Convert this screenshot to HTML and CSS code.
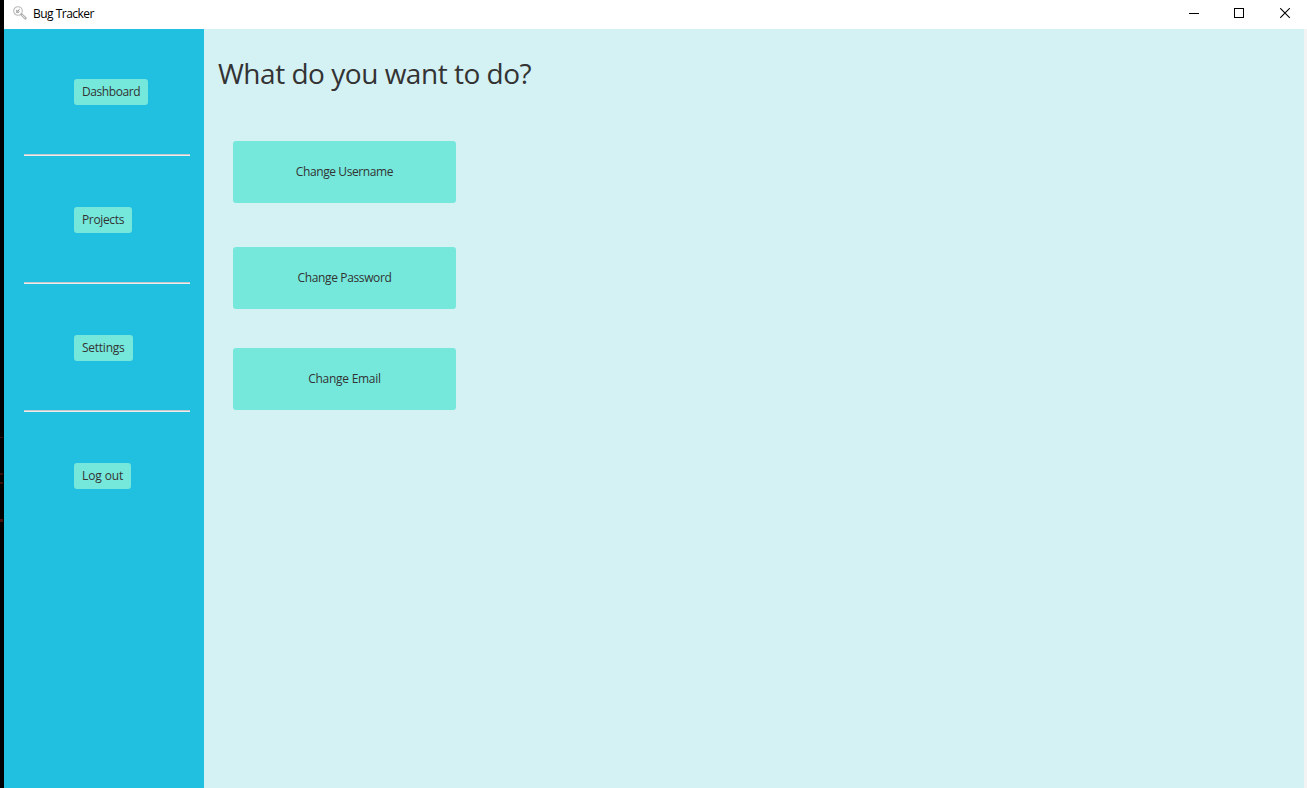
FILE: index.html
```html
<!DOCTYPE html>
<html lang="en">
<head>
<meta charset="utf-8">
<title>Bug Tracker</title>
<link rel="stylesheet" href="styles.css">
</head>
<body>
<div class="desktop">
  <div class="window">
    <header class="titlebar">
      <svg class="app-icon" width="14" height="14" viewBox="0 0 14 14" fill="none">
        <circle cx="5" cy="5" r="4.3" stroke="#b9b9b9" stroke-width="1.1"/>
        <path d="M2.8 6.9 6.8 3M3 4l1 .8M5 7.2l.8-.9M3.5 6 5 4.3l1.2 1L4.5 7Z" stroke="#999" stroke-width=".9"/>
        <path d="M8.4 8.4 12.4 12.3" stroke="#b0b0b0" stroke-width="2.6" stroke-linecap="round"/>
        <path d="M9 9 12.2 12.1" stroke="#eee" stroke-width=".9"/>
      </svg>
      <span class="app-name">Bug Tracker</span>
      <div class="controls">
        <svg width="11" height="11" viewBox="0 0 11 11" shape-rendering="crispEdges"><path d="M0 5h10v1H0z"/></svg>
        <svg class="maximize" width="11" height="11" viewBox="0 0 11 11" fill="none" stroke="#000" shape-rendering="crispEdges"><path d="M.5.5h9v9h-9z"/></svg>
        <svg class="close" width="11" height="11" viewBox="0 0 11 11" fill="none" stroke="#000" stroke-width="1.1"><path d="m.2.2 9.6 9.6M9.8.2.2 9.8"/></svg>
      </div>
    </header>
    <div class="body">
      <nav class="sidebar">
        <button class="nav-button dashboard">Dashboard</button>
        <div class="separator"></div>
        <button class="nav-button projects">Projects</button>
        <div class="separator"></div>
        <button class="nav-button settings">Settings</button>
        <div class="separator"></div>
        <button class="nav-button logout">Log out</button>
      </nav>
      <main class="content">
        <h1 class="heading">What do you want to do?</h1>
        <div class="actions">
          <button class="action username">Change Username</button>
          <button class="action password">Change Password</button>
          <button class="action email">Change Email</button>
        </div>
      </main>
    </div>
  </div>
</div>
</body>
</html>
```
FILE: styles.css
```css
* { box-sizing: border-box; }

body {
  margin: 0;
  font-family: "Open Sans", "Noto Sans", sans-serif;
  font-size: 12px;
  color: #333;
}

.desktop {
  height: 788px;
  overflow: hidden;
  padding-left: 4px;
  background:
    linear-gradient(#3a0c08, #3a0c08) 0 437px / 3px 1px no-repeat,
    linear-gradient(#3a0c08, #3a0c08) 0 473px / 3px 2px no-repeat,
    linear-gradient(#3a0c08, #3a0c08) 0 482px / 3px 2px no-repeat,
    linear-gradient(#4a0f0a, #4a0f0a) 0 519px / 3px 3px no-repeat,
    #000;
}

.window {
  height: 100%;
  display: flex;
  flex-direction: column;
  background: #fff;
}

.titlebar {
  height: 29px;
  display: flex;
  align-items: flex-start;
  padding: 6px 16px 0 9px;
  color: #000;
}

.app-name {
  margin-left: 6px;
  line-height: 16px;
  letter-spacing: -0.52px;
}

.controls {
  display: flex;
  margin: 2px 0 0 auto;
}

.controls svg { display: block; }
.controls .maximize { margin-left: 34px; }
.controls .close { margin-left: 35px; }

.body {
  flex: 1;
  display: flex;
  padding-right: 3px;
  background: #f3f3f3;
}

.sidebar {
  width: 200px;
  padding: 50px 14px 0 20px;
  background: #21c0e1;
}

button {
  border: 0;
  border-radius: 3px;
  background: #75e8db;
  color: #333;
  font: inherit;
  padding: 0;
}

.nav-button {
  display: block;
  height: 26px;
  margin-left: 50px;
  padding-left: 8px;
  line-height: 26px;
  text-align: left;
  white-space: nowrap;
}

.dashboard { width: 74px; letter-spacing: -0.42px; }
.projects { width: 58px; letter-spacing: -0.35px; }
.settings { width: 59px; letter-spacing: -0.25px; }
.logout { width: 57px; letter-spacing: -0.1px; }

.separator {
  height: 2px;
  margin: 49px 0 51px;
  background: linear-gradient(#c8c8c8 50%, #e9edef 50%);
}

.content {
  flex: 1;
  padding: 25px 0 0 14px;
  background: #d4f1f4;
}

.heading {
  margin: 0;
  font-size: 28px;
  font-weight: 400;
  line-height: 38px;
  letter-spacing: -0.48px;
}

.actions {
  display: flex;
  flex-direction: column;
  width: 223px;
  margin: 49px 0 0 15px;
}

.action { height: 62px; padding-bottom: 2px; }
.username { letter-spacing: -0.4px; }
.password { margin-top: 44px; letter-spacing: -0.36px; }
.email { margin-top: 39px; letter-spacing: -0.27px; }
```
